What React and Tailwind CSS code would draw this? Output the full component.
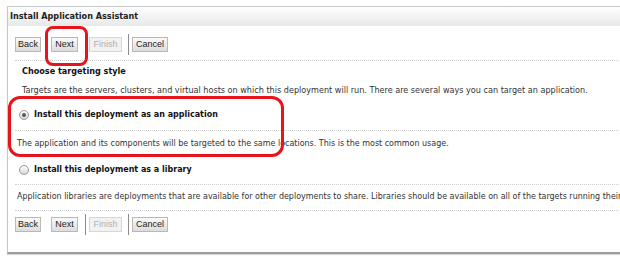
import React from 'react';

const font = { fontFamily: '"DejaVu Sans Condensed", "DejaVu Sans", sans-serif' };

function Btn({ label, disabled, width }) {
  return (
    <div
      className={`h-[15px] flex items-center justify-center border text-[9px] leading-none font-['Liberation_Sans',Arial,sans-serif] ${
        disabled
          ? 'border-[#d6d6d6] bg-[#f2f2f2] text-[#b0b0b0]'
          : 'border-[#b9b9b9] bg-gradient-to-b from-[#fafafa] to-[#dcdcdc] text-[#222]'
      } ${width}`}
    >
      {label}
    </div>
  );
}

function ButtonBar({ className }) {
  return (
    <div className={`flex items-center h-[15px] pl-[7px] ${className}`}>
      <Btn label="Back" width="w-[26px]" />
      <div className="w-[10px]" />
      <Btn label="Next" width="w-[27px]" />
      <div className="w-[7px]" />
      <div className="w-px h-[21px] bg-[#8c8c8c]" />
      <div className="w-[3px]" />
      <Btn label="Finish" width="w-[33px]" disabled />
      <div className="w-[6px]" />
      <div className="w-px h-[21px] bg-[#8c8c8c]" />
      <div className="w-[3px]" />
      <Btn label="Cancel" width="w-[36px]" />
    </div>
  );
}

function Radio({ checked }) {
  return (
    <div className="w-[10px] h-[10px] rounded-full border border-[#9a9a9a] bg-gradient-to-b from-[#ffffff] to-[#d8d8d8] flex items-center justify-center">
      {checked && <div className="w-[4px] h-[4px] rounded-full bg-[#555]" />}
    </div>
  );
}

function Dots({ className }) {
  return <div className={`ml-[7px] border-t border-dotted border-[#cfcfcf] ${className}`} />;
}

export default function App() {
  return (
    <div className="relative w-[620px] h-[273px] bg-white overflow-hidden pt-[6px] pl-[7px]" style={font}>
      <div className="w-[640px] h-[248px] border-l border-t border-[#c3c8cf] border-b-2 border-b-[#9c9c9c] shadow-[0_1px_1px_rgba(0,0,0,0.15)]">
        <div className="h-[19px] flex items-center pl-[2px] bg-gradient-to-b from-[#ffffff] to-[#e7e8e8] text-[9px] font-bold text-[#222]">
          Install Application Assistant
        </div>

        <ButtonBar className="mt-[11px]" />

        <Dots className="mt-[8px]" />

        <div className="ml-[14px] mt-[5px] h-[12px] flex items-center text-[9px] font-bold text-[#111]">
          Choose targeting style
        </div>
        <div className="ml-[14px] mt-[7px] h-[12px] flex items-center text-[9px] text-[#333] whitespace-nowrap">
          Targets are the servers, clusters, and virtual hosts on which this deployment will run. There are several ways you can target an application.
        </div>

        <div className="ml-[11px] mt-[11px] h-[14px] flex items-center gap-[5px] text-[8.9px] font-bold text-[#111]">
          <Radio checked />
          Install this deployment as an application
        </div>
        <Dots className="mt-[8px]" />
        <div className="ml-[9px] mt-[7px] h-[12px] flex items-center text-[8.9px] text-[#333] whitespace-nowrap">
          The application and its components will be targeted to the same locations. This is the most common usage.
        </div>

        <div className="ml-[11px] mt-[13px] h-[14px] flex items-center gap-[5px] text-[8.9px] font-bold text-[#111]">
          <Radio />
          Install this deployment as a library
        </div>
        <Dots className="mt-[7px]" />
        <div className="ml-[9px] mt-[6px] h-[12px] flex items-center text-[8.9px] text-[#333] whitespace-nowrap overflow-hidden w-[604px]">
          Application libraries are deployments that are available for other deployments to share. Libraries should be available on all of the targets running their
        </div>
        <Dots className="mt-[7px]" />

        <ButtonBar className="mt-[6px]" />
      </div>

      <div className="absolute left-[45px] top-[26px] w-[43px] h-[40px] border-[3px] border-[#e8141c] rounded-[8px]" />
      <div className="absolute left-[8px] top-[96px] w-[276px] h-[61px] border-[3px] border-[#e8141c] rounded-[12px]" />
    </div>
  );
}
